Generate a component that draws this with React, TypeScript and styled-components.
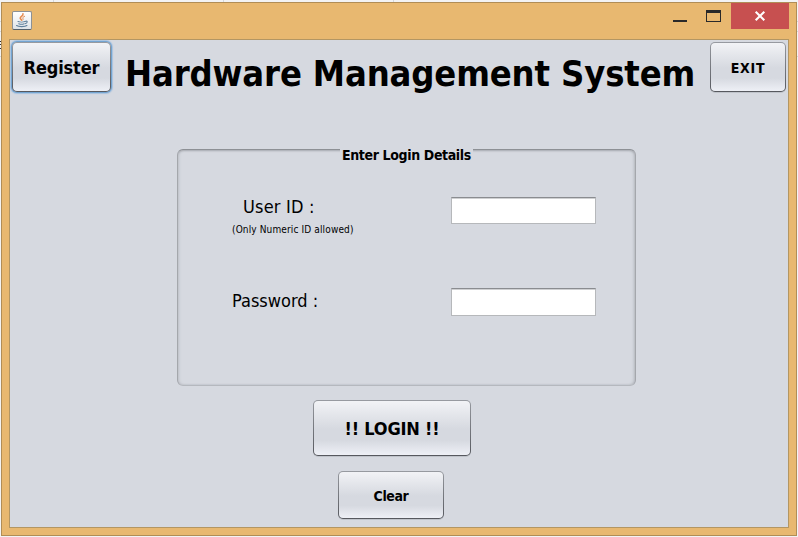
import React from "react";
import styled, { createGlobalStyle, css } from "styled-components";

const GlobalStyle = createGlobalStyle`
  * { box-sizing: border-box; }
  html, body { margin: 0; padding: 0; }
  body {
    width: 798px;
    height: 537px;
    overflow: hidden;
    background: #f3f3f4;
    color: #000;
    font-family: "DejaVu Sans Condensed", "DejaVu Sans", sans-serif;
    font-stretch: condensed;
  }
`;

const Desktop = styled.div`
  width: 798px;
  height: 537px;
  padding: 2px 1px 1px;
  overflow: hidden;
  background:
    linear-gradient(#d5d7da, #d5d7da) 53px 0 / 1px 2px no-repeat,
    linear-gradient(#d5d7da, #d5d7da) 223px 0 / 1px 2px no-repeat,
    linear-gradient(#d5d7da, #d5d7da) 393px 0 / 1px 2px no-repeat,
    linear-gradient(#d5d7da, #d5d7da) 0 21px / 100% 1px no-repeat,
    linear-gradient(#d5d7da, #d5d7da) 0 31px / 100% 1px no-repeat,
    linear-gradient(#d5d7da, #d5d7da) 0 56px / 100% 1px no-repeat,
    linear-gradient(#333, #333) 0 41px / 1px 1px no-repeat,
    linear-gradient(#333, #333) 0 44px / 1px 1px no-repeat,
    linear-gradient(#333, #333) 0 48px / 1px 1px no-repeat,
    #f3f3f4;
`;

const Window = styled.main`
  width: 796px;
  height: 534px;
  display: flex;
  flex-direction: column;
  padding: 0 7px 7px;
  border: 1px solid #b08d57;
  background: #e8b870;
`;

const TitleBar = styled.header`
  height: 36px;
  flex: none;
  display: flex;
  align-items: flex-start;
  justify-content: space-between;
`;

const AppIcon = styled.div`
  width: 20px;
  height: 19px;
  margin: 8px 0 0 3px;
  border: 1px solid #8b9197;
  border-bottom-color: #53606c;
  border-radius: 2px;
  background: linear-gradient(#fff, #dfe3e8);
  svg { display: block; }
`;

const Controls = styled.div`
  display: flex;
  align-items: flex-start;
`;

const Minimize = styled.div`
  width: 14px;
  height: 2px;
  margin: 17px 19px 0 0;
  background: #292929;
`;

const Maximize = styled.div`
  width: 15px;
  height: 12px;
  margin: 7px 10px 0 0;
  border: 1px solid #292929;
  border-top-width: 3px;
`;

const Close = styled.div`
  width: 58px;
  height: 26px;
  display: flex;
  justify-content: center;
  padding-top: 8px;
  background: #c75050;
`;

const Content = styled.section`
  height: 489px;
  display: flex;
  flex-direction: column;
  align-items: flex-start;
  border: 1px solid #b39663;
  background: #d6d9e0;
`;

const Header = styled.div`
  width: 100%;
  height: 55px;
  display: flex;
  align-items: flex-start;
  padding: 2px 2px 0;
`;

const Label = styled.span<{ $size: number; $bold?: boolean; $track?: number }>`
  display: block;
  white-space: pre;
  line-height: 1.2;
  font-size: ${(p) => p.$size}px;
  font-weight: ${(p) => (p.$bold ? 700 : 400)};
  letter-spacing: ${(p) => p.$track ?? 0}px;
`;

const Title = styled.h1`
  width: 599px;
  margin: 10px 0 0;
  padding-left: 14px;
`;

const PushButton = styled.button<{ $w: number; $h: number; $focused?: boolean }>`
  flex: none;
  width: ${(p) => p.$w}px;
  height: ${(p) => p.$h}px;
  display: flex;
  align-items: center;
  justify-content: center;
  padding: 2px 0 0;
  color: #000;
  font-family: inherit;
  font-stretch: inherit;
  border: 1px solid transparent;
  border-radius: 5px;
  background:
    linear-gradient(#f2f3f6 0%, #e4e6eb 25%, #d6d9e0 52%, #d6d9e0 73%, #eef0f6 100%) padding-box,
    linear-gradient(#979aa0, #56585e) border-box;
  box-shadow: 0 1px 0 #bfc3ca;
  ${(p) =>
    p.$focused &&
    css`
      box-shadow: 0 0 0 1px #73a4d1, 0 0 1px 2px #a8c2df;
    `}
`;

const Group = styled.fieldset`
  position: relative;
  width: 459px;
  height: 237px;
  margin: 54px 0 0 167px;
  padding: 46px 39px 0 54px;
  border: 1px solid #a4a7ac;
  border-top-color: #8d9095;
  border-bottom-color: #b5b8be;
  border-radius: 6px;
  box-shadow: inset 0 2px 2px -1px #a9acb2, inset 2px 0 3px -1px #bfc2c8, inset -2px 0 3px -1px #b4b7bd, inset 0 -1px 2px -1px #b7bac0;
`;

const GroupTitle = styled.div`
  position: absolute;
  top: -3px;
  left: 162px;
  width: 133px;
  height: 18px;
  padding-left: 2px;
  background: #d6d9e0;
`;

const FieldRow = styled.label`
  height: 91px;
  display: flex;
  justify-content: space-between;
  align-items: flex-start;
`;

const Caption = styled.div<{ $indent?: number; $top?: number }>`
  padding-top: ${(p) => p.$top ?? 0}px;
  > :first-child { margin-left: ${(p) => p.$indent ?? 0}px; }
  > :nth-child(2) { margin-top: 6px; }
`;

const TextInput = styled.input<{ $h: number }>`
  width: 145px;
  height: ${(p) => p.$h}px;
  margin: 1px 0 0;
  padding: 0 5px;
  border: 1px solid #b6b8bb;
  border-top-color: #8a8c90;
  border-radius: 0;
  outline: none;
  background: #fff;
  box-shadow: inset 0 1px 0 #cfd0d2;
`;

const Actions = styled.div`
  width: 158px;
  margin: 14px 0 0 303px;
  display: flex;
  flex-direction: column;
  gap: 15px;
  > :last-child { margin-left: 25px; }
`;

const JavaCup = () => (
  <svg width="18" height="17" viewBox="0 0 18 17" fill="none" strokeLinecap="round">
    <path d="M10 1.8C10.5 3.9 7 4.6 7.2 6.2C7.3 7.1 8.5 7.3 8.4 8.2" stroke="#e58a4e" strokeWidth="1.5" />
    <path d="M11.6 4.3C9.7 5.1 9.4 5.9 10 6.7C10.3 7.2 10 7.8 9.6 8.2" stroke="#e58a4e" strokeWidth="1" />
    <path d="M5 9.6C6.5 10.2 10.5 10.2 12 9.6M5.8 11.7C7.3 12.3 9.7 12.3 11.2 11.7M12.6 9.2C15 8.8 14.4 11 12.5 11.6" stroke="#5e7f9c" strokeWidth="1.1" />
    <path d="M3.6 13.6C5.4 14.9 12 14.9 13.9 13.6" stroke="#5e7f9c" strokeWidth="1.2" />
  </svg>
);

export default function App() {
  return (
    <>
      <GlobalStyle />
      <Desktop>
        <Window>
          <TitleBar>
            <AppIcon><JavaCup /></AppIcon>
            <Controls>
              <Minimize />
              <Maximize />
              <Close>
                <svg width="12" height="10" viewBox="0 0 12 10">
                  <path d="M1.7 0.8L10.3 9.2M10.3 0.8L1.7 9.2" stroke="#fff" strokeWidth="2.1" />
                </svg>
              </Close>
            </Controls>
          </TitleBar>
          <Content>
            <Header>
              <PushButton $w={99} $h={50} $focused><Label $size={18} $bold $track={-0.15}>Register</Label></PushButton>
              <Title><Label $size={36} $bold $track={-0.14}>Hardware Management System</Label></Title>
              <PushButton $w={76} $h={50}><Label $size={14} $bold $track={0.7}>EXIT</Label></PushButton>
            </Header>
            <Group>
              <GroupTitle><Label $size={14} $bold $track={-0.36}>Enter Login Details</Label></GroupTitle>
              <FieldRow>
                <Caption $indent={11}>
                  <Label $size={18} $track={0.2}>User ID :</Label>
                  <Label $size={10} $track={0.13}>(Only Numeric ID allowed)</Label>
                </Caption>
                <TextInput $h={27} aria-label="User ID" />
              </FieldRow>
              <FieldRow>
                <Caption $top={3}><Label $size={18}>Password :</Label></Caption>
                <TextInput $h={28} type="password" aria-label="Password" />
              </FieldRow>
            </Group>
            <Actions>
              <PushButton $w={158} $h={56}><Label $size={18} $bold $track={-0.2}>!! LOGIN !!</Label></PushButton>
              <PushButton $w={106} $h={48}><Label $size={14} $bold $track={-0.4}>Clear</Label></PushButton>
            </Actions>
          </Content>
        </Window>
      </Desktop>
    </>
  );
}
